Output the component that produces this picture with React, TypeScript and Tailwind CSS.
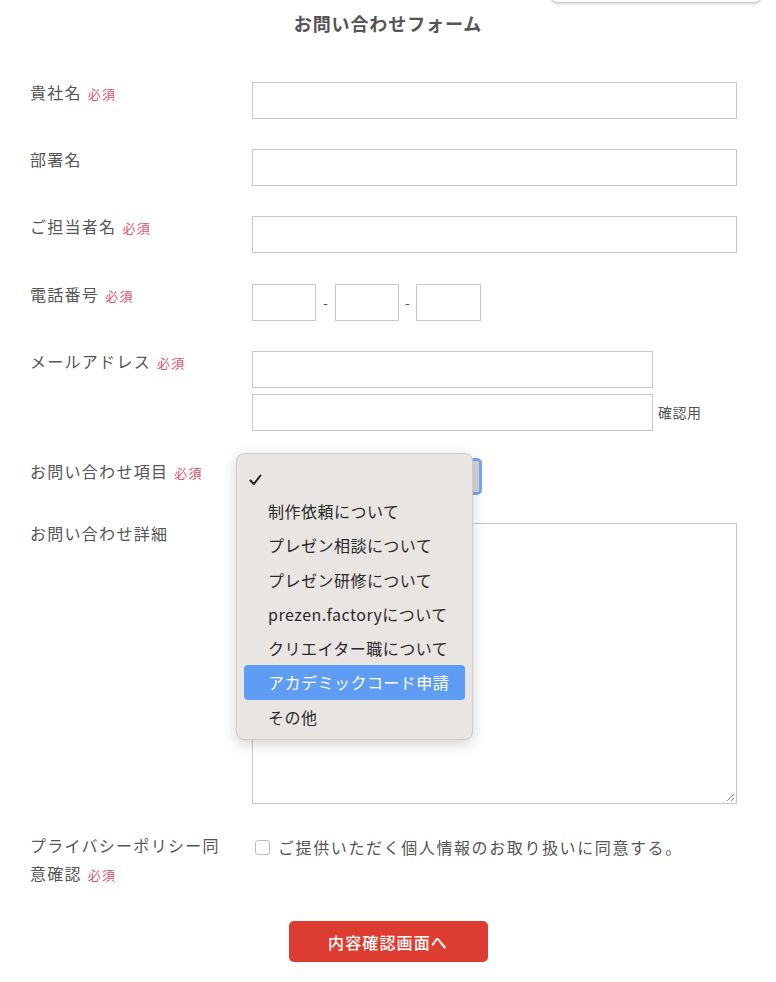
import React from "react";

const font = { fontFamily: '"Noto Sans CJK JP", "Noto Sans", sans-serif' };

function Req() {
  return <span className="ml-[6px] text-[13px] text-[#e0506a]">必須</span>;
}

function Label({ children, req }: { children: React.ReactNode; req?: boolean }) {
  return (
    <div className="-mt-[2px] w-[222px] shrink-0 text-[16px] leading-[24px] tracking-[0.08em] text-[#555]">
      {children}
      {req && <Req />}
    </div>
  );
}

const inputCls = "h-[37px] border border-[#c8c8c8] bg-white";

export default function App() {
  const items = [
    "制作依頼について",
    "プレゼン相談について",
    "プレゼン研修について",
    "prezen.factoryについて",
    "クリエイター職について",
    "アカデミックコード申請",
    "その他",
  ];
  return (
    <div style={font} className="relative h-[982px] w-[776px] overflow-hidden bg-white">
      <div className="absolute right-[14px] top-[-20px] h-[23px] w-[212px] rounded-[8px] border border-[#d0d0d0] bg-white shadow-[0_1px_3px_rgba(0,0,0,0.2)]" />
      <h1 className="pt-[11px] text-center text-[18px] font-bold leading-[24px] tracking-[0.05em] text-[#555]">
        お問い合わせフォーム
      </h1>
      <div className="pl-[30px] pr-[39px] pt-[47px]">
        <div className="flex">
          <Label req>貴社名</Label>
          <div className={inputCls + " flex-1"} />
        </div>
        <div className="mt-[30px] flex">
          <Label>部署名</Label>
          <div className={inputCls + " flex-1"} />
        </div>
        <div className="mt-[30px] flex">
          <Label req>ご担当者名</Label>
          <div className={inputCls + " flex-1"} />
        </div>
        <div className="mt-[31px] flex">
          <Label req>電話番号</Label>
          <div className="flex items-center">
            <div className={inputCls + " w-[64px]"} />
            <span className="w-[19px] text-center text-[14px] text-[#555]">-</span>
            <div className={inputCls + " w-[64px]"} />
            <span className="w-[17px] text-center text-[14px] text-[#555]">-</span>
            <div className={inputCls + " w-[65px]"} />
          </div>
        </div>
        <div className="mt-[30px] flex">
          <Label req>メールアドレス</Label>
          <div className="flex flex-col gap-[6px]">
            <div className={inputCls + " w-[401px]"} />
            <div className="flex items-center">
              <div className={inputCls + " w-[401px]"} />
              <span className="ml-[5px] text-[14px] tracking-[0.04em] text-[#555]">確認用</span>
            </div>
          </div>
        </div>
        <div className="relative mt-[27px] flex">
          <div className="pt-[3px]">
            <Label req>お問い合わせ項目</Label>
          </div>
          <div className="h-[37px] w-[230px] rounded-[5px] border-[3px] border-[#7aa7f0] bg-[#d6d6d6]" />
          <div className="absolute left-[206px] top-[-5px] z-10 h-[287px] w-[237px] rounded-[8px] border border-[#cfcbc8] bg-[#e9e5e2] px-[7px] pt-[11px] shadow-[0_4px_14px_rgba(0,0,0,0.18)]">
            <div className="flex h-[29px] items-center pl-[5px]">
              <svg width="13" height="12" viewBox="0 0 13 12">
                <path d="M1.5 6.5L4.8 10.2L11.5 1.5" fill="none" stroke="#222" strokeWidth="2" strokeLinecap="round" strokeLinejoin="round" />
              </svg>
            </div>
            {items.map((it) => (
              <div
                key={it}
                className={
                  "h-[34.3px] rounded-[4px] pl-[24px] text-[16px] leading-[34px] tracking-[0.03em] " +
                  (it === "アカデミックコード申請" ? "bg-[#5f9cf4] text-white" : "text-[#2a2a2a]")
                }
              >
                {it}
              </div>
            ))}
          </div>
        </div>
        <div className="mt-[28px] flex">
          <Label>お問い合わせ詳細</Label>
          <div className="relative h-[281px] flex-1 border border-[#c8c8c8] bg-white">
            <svg className="absolute bottom-[1px] right-[1px]" width="9" height="9" viewBox="0 0 9 9">
              <path d="M8 1L1 8M8 5L5 8" stroke="#888" strokeWidth="1" />
            </svg>
          </div>
        </div>
        <div className="mt-[29px] flex">
          <div className="-mt-[2px] w-[222px] shrink-0 text-[16px] leading-[28px] tracking-[0.08em] text-[#555]">
            プライバシーポリシー同
            <br />
            意確認
            <Req />
          </div>
          <label className="flex h-[28px] items-center">
            <span className="ml-[3px] h-[15px] w-[15px] rounded-[3px] border border-[#bbb] bg-white" />
            <span className="ml-[8px] text-[16px] tracking-[0.1em] text-[#555]">
              ご提供いただく個人情報のお取り扱いに同意する。
            </span>
          </label>
        </div>
        <div className="mt-[32px] flex justify-center">
          <button className="ml-[9px] h-[41px] w-[199px] rounded-[5px] bg-[#dd3c31] text-[16px] font-medium tracking-[0.07em] text-white">
            内容確認画面へ
          </button>
        </div>
      </div>
    </div>
  );
}
